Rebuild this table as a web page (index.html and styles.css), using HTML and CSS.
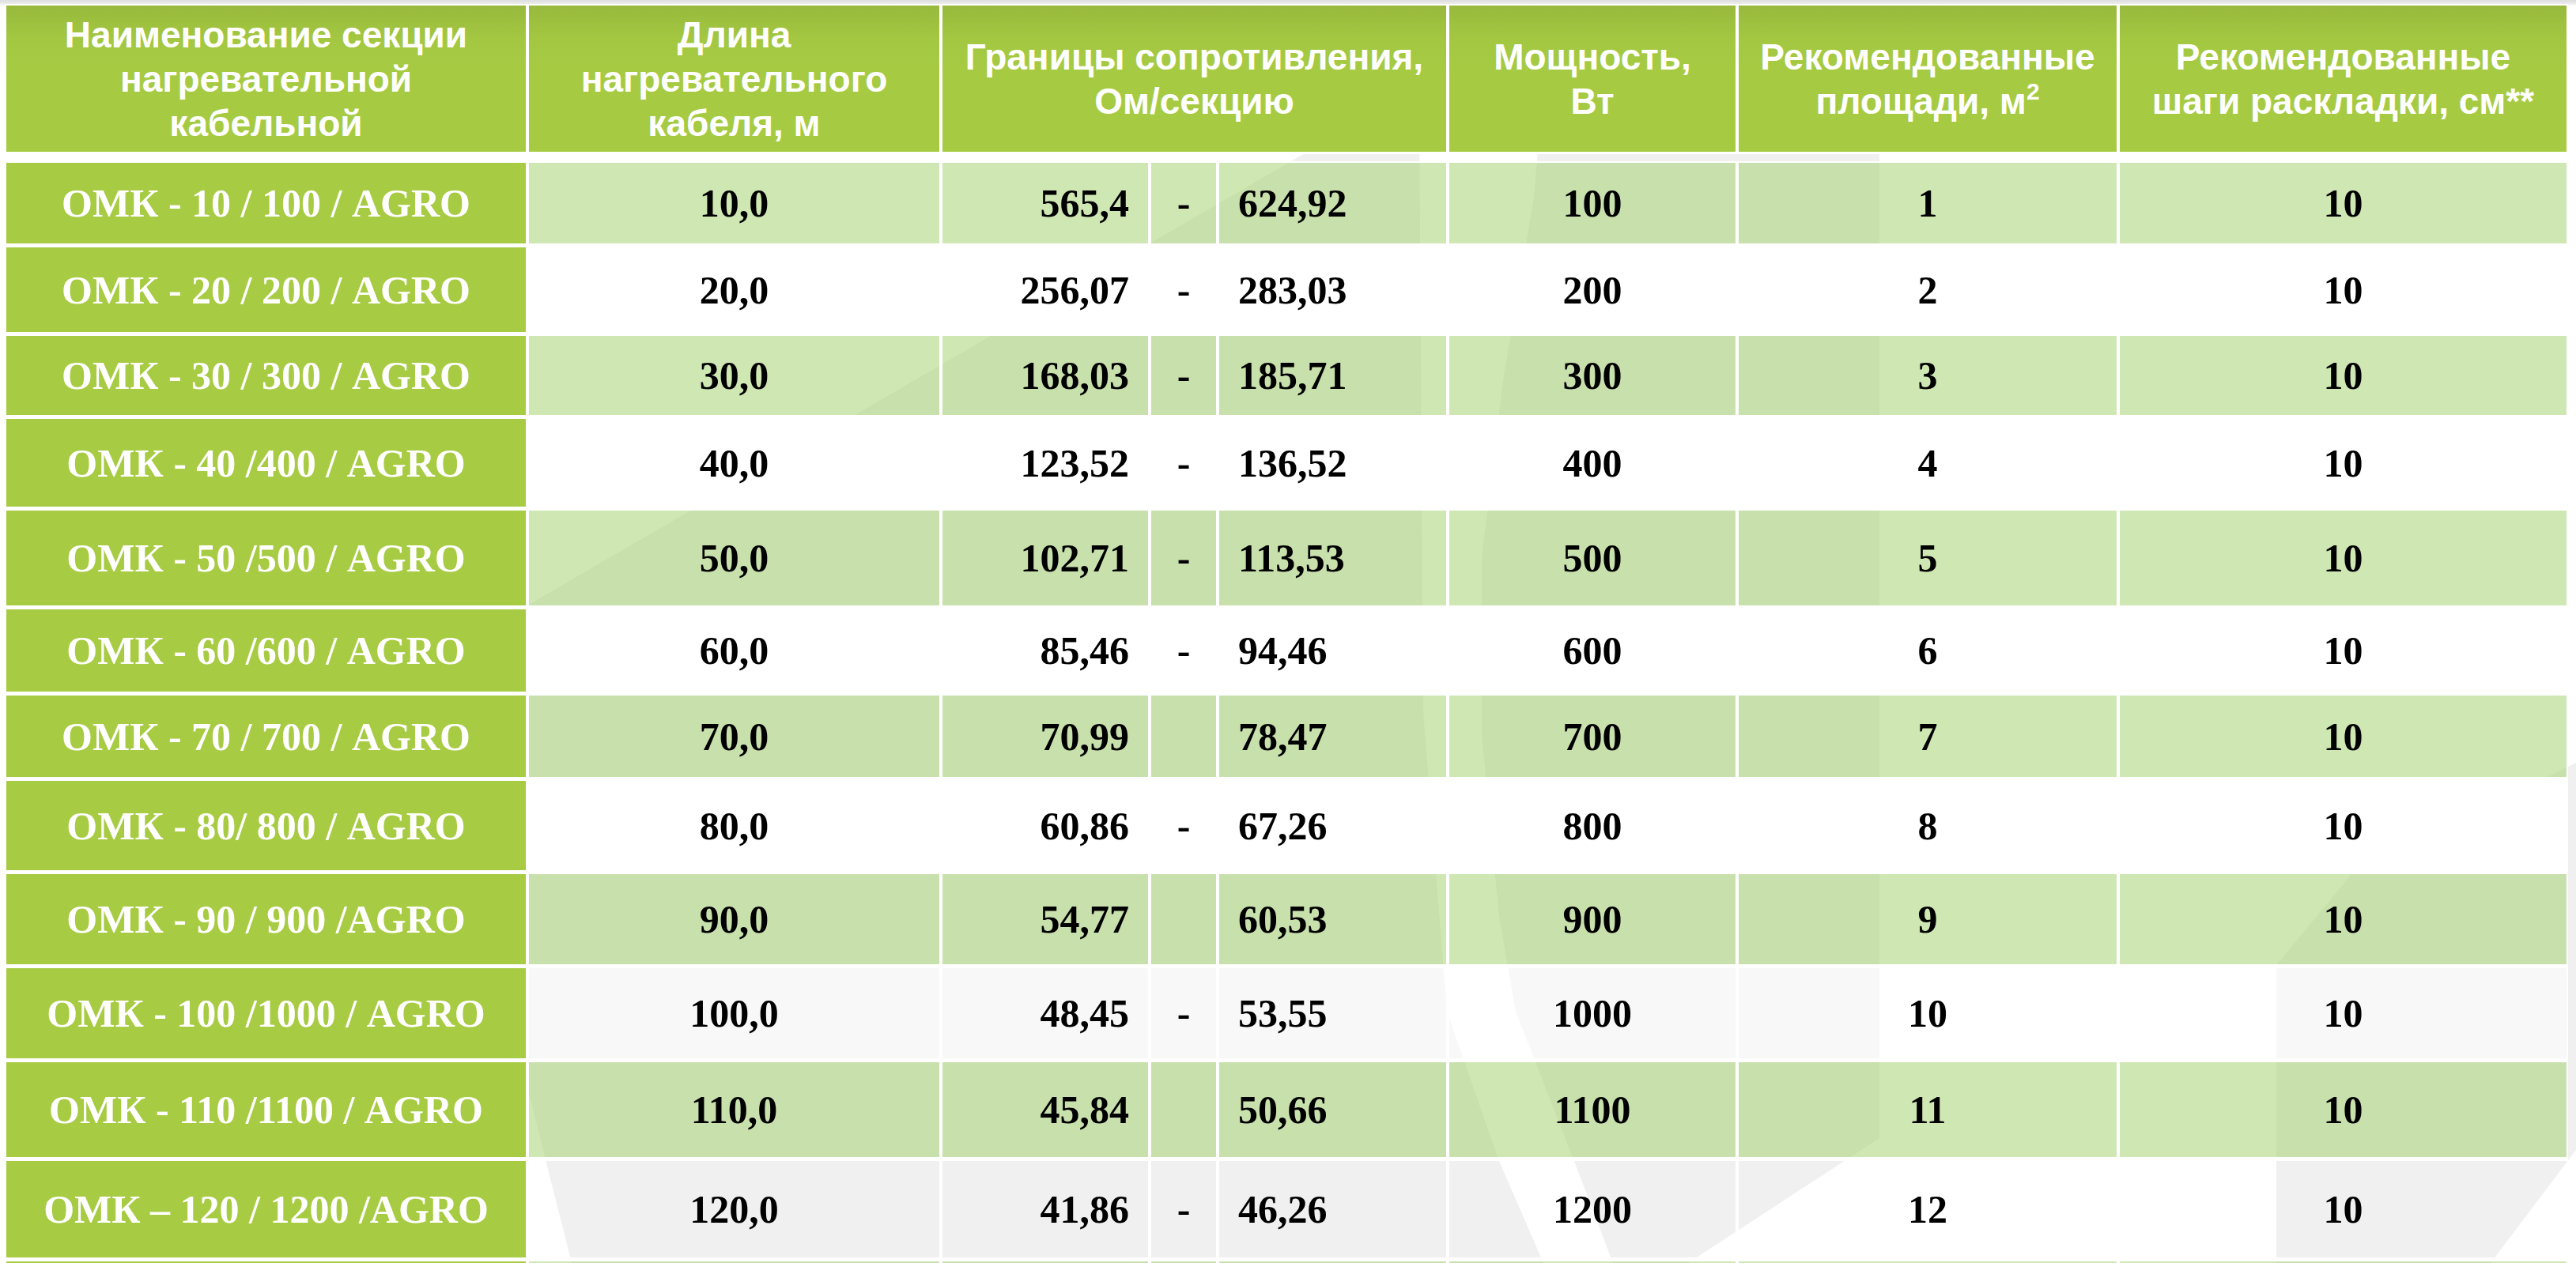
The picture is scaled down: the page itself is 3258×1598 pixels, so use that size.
FILE: index.html
```html
<!DOCTYPE html>
<html lang="ru">
<head>
<meta charset="utf-8">
<title>ОМК AGRO</title>
<link rel="stylesheet" href="styles.css">
</head>
<body>
<svg class="watermark" width="3258" height="1598" viewBox="0 0 3258 1598" aria-hidden="true">
  <polygon points="1760,130 1795,130 1800,900 1830,1280 1896,1469 1952,1598 723,1598 533,844"/>
  <polygon points="1950,130 2377,130 2377,1440 2135,1598 2040,1598 1991,1469 1917,1280 1896,1160 1874,930 1874,705 1902,475 1940,250"/>
  <polygon points="2879,1598 2879,1221 2974,1106 3258,965 3258,1455 3150,1598"/>
</svg>
<main class="sheet">
  <div class="grid head">
    <div class="th"><span>Наименование секции<br>нагревательной<br>кабельной</span></div>
    <div class="th"><span>Длина<br>нагревательного<br>кабеля, м</span></div>
    <div class="th span3"><span>Границы сопротивления,<br>Ом/секцию</span></div>
    <div class="th"><span>Мощность,<br>Вт</span></div>
    <div class="th"><span>Рекомендованные<br>площади, м<sup>2</sup></span></div>
    <div class="th"><span>Рекомендованные<br>шаги раскладки, см**</span></div>
  </div>
  <div class="grid body">
    <div class="name">ОМК - 10 / 100 / AGRO</div><div class="c g">10,0</div><div class="c g r">565,4</div><div class="c g">-</div><div class="c g l">624,92</div><div class="c g">100</div><div class="c g">1</div><div class="c g">10</div>
    <div class="name">ОМК - 20 / 200 / AGRO</div><div class="c w">20,0</div><div class="c w r">256,07</div><div class="c w">-</div><div class="c w l">283,03</div><div class="c w">200</div><div class="c w">2</div><div class="c w">10</div>
    <div class="name">ОМК - 30 / 300 / AGRO</div><div class="c g">30,0</div><div class="c g r">168,03</div><div class="c g">-</div><div class="c g l">185,71</div><div class="c g">300</div><div class="c g">3</div><div class="c g">10</div>
    <div class="name">ОМК - 40 /400 / AGRO</div><div class="c w">40,0</div><div class="c w r">123,52</div><div class="c w">-</div><div class="c w l">136,52</div><div class="c w">400</div><div class="c w">4</div><div class="c w">10</div>
    <div class="name">ОМК - 50 /500 / AGRO</div><div class="c g">50,0</div><div class="c g r">102,71</div><div class="c g">-</div><div class="c g l">113,53</div><div class="c g">500</div><div class="c g">5</div><div class="c g">10</div>
    <div class="name">ОМК - 60 /600 / AGRO</div><div class="c w">60,0</div><div class="c w r">85,46</div><div class="c w">-</div><div class="c w l">94,46</div><div class="c w">600</div><div class="c w">6</div><div class="c w">10</div>
    <div class="name">ОМК - 70 / 700 / AGRO</div><div class="c g">70,0</div><div class="c g r">70,99</div><div class="c g"></div><div class="c g l">78,47</div><div class="c g">700</div><div class="c g">7</div><div class="c g">10</div>
    <div class="name">ОМК - 80/ 800 / AGRO</div><div class="c w">80,0</div><div class="c w r">60,86</div><div class="c w">-</div><div class="c w l">67,26</div><div class="c w">800</div><div class="c w">8</div><div class="c w">10</div>
    <div class="name">ОМК - 90 / 900 /AGRO</div><div class="c g">90,0</div><div class="c g r">54,77</div><div class="c g"></div><div class="c g l">60,53</div><div class="c g">900</div><div class="c g">9</div><div class="c g">10</div>
    <div class="name">ОМК - 100 /1000 / AGRO</div><div class="c p">100,0</div><div class="c p r">48,45</div><div class="c p">-</div><div class="c p l">53,55</div><div class="c p">1000</div><div class="c p">10</div><div class="c p">10</div>
    <div class="name">ОМК - 110 /1100 / AGRO</div><div class="c g">110,0</div><div class="c g r">45,84</div><div class="c g"></div><div class="c g l">50,66</div><div class="c g">1100</div><div class="c g">11</div><div class="c g">10</div>
    <div class="name">ОМК – 120 / 1200 /AGRO</div><div class="c t">120,0</div><div class="c t r">41,86</div><div class="c t">-</div><div class="c t l">46,26</div><div class="c t">1200</div><div class="c t">12</div><div class="c t">10</div>
    <div class="name"></div><div class="c g"></div><div class="c g"></div><div class="c g"></div><div class="c g"></div><div class="c g"></div><div class="c g"></div><div class="c g"></div>
  </div>
</main>
</body>
</html>
```

FILE: styles.css
```css
html, body {
  margin: 0;
  padding: 0;
  width: 3258px;
  height: 1598px;
  overflow: hidden;
}

body {
  position: relative;
  background: linear-gradient(to bottom, #dedede 0, #e9e9e9 4px, #f6f6f6 6px, #ffffff 8px) no-repeat;
  background-color: #ffffff;
}

.watermark {
  position: absolute;
  top: 0;
  left: 0;
  z-index: 0;
}

.watermark polygon {
  fill: #f0f0f0;
}

.sheet {
  position: relative;
  z-index: 1;
  padding: 5px 0 0 6px;
}

.grid {
  display: grid;
  grid-template-columns: 661px 523px 264px 86px 291px 366px 482px 569px;
}

.head {
  grid-template-rows: 190px;
  margin-bottom: 9px;
}

.body {
  grid-template-rows: 107px 112px 105px 116px 125px 109px 108px 118px 119px 119px 125px 127px 50px;
}

.th, .name, .c {
  border-style: solid;
  border-color: #ffffff;
  border-width: 2px 2px 3px 2px;
  background-clip: padding-box;
  display: flex;
  align-items: center;
  justify-content: center;
  text-align: center;
}

.th {
  background-image: linear-gradient(to bottom, #98b93d 0%, #a3c741 22%, #a6cb43 45%, #a6cb43 100%);
  color: #ffffff;
  font-family: "Liberation Sans", Arial, sans-serif;
  font-weight: bold;
  font-size: 46px;
  line-height: 56px;
}

.th span {
  display: block;
}

.th sup {
  font-size: 30px;
  line-height: 0;
  vertical-align: 18px;
}

.span3 {
  grid-column: span 3;
}

.name {
  background-color: #a7cb42;
  color: #ffffff;
  font-family: "Liberation Serif", "Times New Roman", serif;
  font-weight: bold;
  font-size: 50px;
  line-height: 1;
  white-space: nowrap;
}

.c {
  color: #000000;
  font-family: "Liberation Serif", "Times New Roman", serif;
  font-weight: bold;
  font-size: 50px;
  line-height: 1;
  white-space: nowrap;
}

.c.r {
  justify-content: flex-end;
  padding-right: 24px;
}

.c.l {
  justify-content: flex-start;
  padding-left: 24px;
}

.g {
  background-color: rgba(164, 210, 112, 0.53);
}

.w {
  background-color: #ffffff;
}

.p {
  background-color: rgba(255, 255, 255, 0.55);
}

.t {
  background-color: transparent;
}
```
